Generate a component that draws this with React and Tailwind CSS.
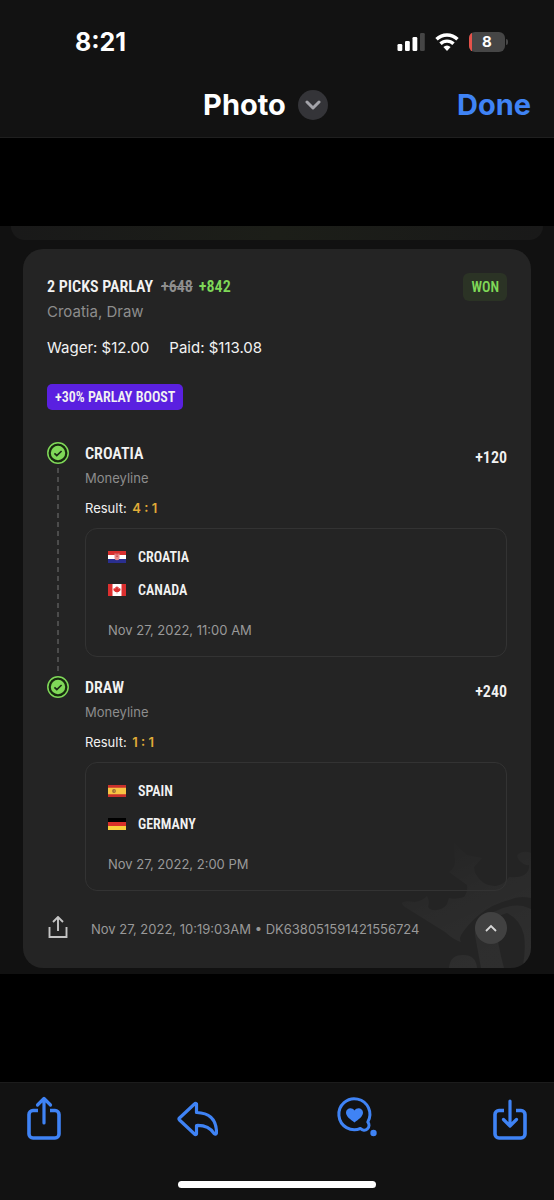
import clsx from 'clsx';

const legs = [
  {
    pick: 'CROATIA',
    market: 'Moneyline',
    result: '4 : 1',
    odds: '+120',
    date: 'Nov 27, 2022, 11:00 AM',
    teams: [
      { name: 'CROATIA', flag: 'croatia' },
      { name: 'CANADA', flag: 'canada' },
    ],
  },
  {
    pick: 'DRAW',
    market: 'Moneyline',
    result: '1 : 1',
    odds: '+240',
    date: 'Nov 27, 2022, 2:00 PM',
    teams: [
      { name: 'SPAIN', flag: 'spain' },
      { name: 'GERMANY', flag: 'germany' },
    ],
  },
];

const narrow = "font-['Roboto_Condensed','Liberation_Sans_Narrow',Roboto,sans-serif] font-semibold";

function Flag({ country }) {
  return (
    <svg className="w-[18px] h-3 shrink-0" viewBox="0 0 18 12" aria-hidden="true">
      {country === 'croatia' && (
        <>
          <path fill="#d8302f" d="M0 0h18v4H0z" />
          <path fill="#fff" d="M0 4h18v4H0z" />
          <path fill="#2a2f8f" d="M0 8h18v4H0z" />
          <path fill="#e88a8a" d="M6.500 2.500h5v4.500a2.500 2.200 0 0 1-5 0z" />
          <path fill="#c94a50" d="M7.500 2h3v1.500h-3zM8.300 4.500h1.500V6H8.300z" />
        </>
      )}
      {country === 'canada' && (
        <>
          <path fill="#fff" d="M0 0h18v12H0z" />
          <path fill="#dc2f2f" d="M0 0h4.500v12H0zM13.500 0H18v12h-4.500z" />
          <path fill="#dc2f2f" d="M9 2l.9 1.500.9-.4-.2 1.800 1.100-.8.9.9-.3 1.500-1.700 1.500H9.300v1.500h-.6V8H7.300L5.600 6.500 5.300 5l.9-.9 1.100.8-.2-1.800.9.4z" />
        </>
      )}
      {country === 'spain' && (
        <>
          <path fill="#c9302c" d="M0 0h18v12H0z" />
          <path fill="#f7c443" d="M0 2.800h18v6.400H0z" />
          <circle cx="6" cy="6" r="1.900" fill="#9a6a35" />
          <circle cx="6.300" cy="6" r=".7" fill="#d8a04a" />
        </>
      )}
      {country === 'germany' && (
        <>
          <path fill="#000" d="M0 0h18v4H0z" />
          <path fill="#d8302a" d="M0 4h18v4H0z" />
          <path fill="#f8cf3c" d="M0 8h18v4H0z" />
        </>
      )}
    </svg>
  );
}

function StatusBar() {
  return (
    <div className="flex items-center justify-between h-11 pl-[75px] pr-[46px]">
      <span className="text-[25px] leading-8 font-bold">8:21</span>
      <div className="flex items-center gap-2.5">
        <svg className="w-7 h-5" viewBox="0 0 28 20" aria-hidden="true">
          <rect x="0.500" y="12" width="4.800" height="7" rx="1.300" fill="#fff" />
          <rect x="8" y="9" width="4.800" height="10" rx="1.300" fill="#fff" />
          <rect x="15.500" y="5" width="4.800" height="14" rx="1.300" fill="#fff" />
          <rect x="23" y="1" width="4.800" height="18" rx="1.300" fill="#454545" />
        </svg>
        <svg className="w-6 h-5" viewBox="0 0 24 20" aria-hidden="true">
          <g fill="none" stroke="#fff" strokeWidth="3.400">
            <path d="M1.500 7.300a15 15 0 0 1 21 0" />
            <path d="M5.500 11.800a9.300 9.300 0 0 1 13 0" />
          </g>
          <path fill="#fff" d="M12 19l-3.600-3.900a5 5 0 0 1 7.200 0z" />
        </svg>
        <div className="flex items-center gap-px">
          <div className="relative flex items-center justify-center w-9 h-5 rounded-md bg-[#464646] overflow-hidden">
            <span className="absolute left-0 inset-y-0 w-[3px] bg-[#e5524a]" />
            <span className="text-[15px] leading-5 font-bold">8</span>
          </div>
          <span className="w-0.5 h-1.5 rounded-r-full bg-[#464646]" />
        </div>
      </div>
    </div>
  );
}

function WonCheck() {
  return (
    <svg className="w-[22px] h-[22px] shrink-0" viewBox="0 0 22 22" aria-hidden="true">
      <circle cx="11" cy="11" r="10.200" fill="#17290f" stroke="#7fd858" strokeWidth="1.500" />
      <circle cx="11" cy="11" r="7.200" fill="#7fd858" />
      <path d="M7.400 11.300l2.400 2.200 4.800-4.500" fill="none" stroke="#1c2a16" strokeWidth="1.700" />
    </svg>
  );
}

function Watermark() {
  return (
    <svg className="absolute right-0 bottom-0 w-[130px] h-[138px]" viewBox="0 0 130 138" aria-hidden="true">
      <defs>
        <linearGradient id="fade" gradientUnits="userSpaceOnUse" x1="50" y1="20" x2="95" y2="120">
          <stop offset="0" stopColor="#fff" stopOpacity="0.006" />
          <stop offset="0.450" stopColor="#fff" stopOpacity="0.030" />
          <stop offset="1" stopColor="#fff" stopOpacity="0.045" />
        </linearGradient>
      </defs>
      <g fill="url(#fade)">
        <path d="M1 73q2-3 13-1 7-1 12-6 3 5 1 11 3 4 9 3 7-1 10-6l2-6q6 2 15-1 4-5 3-12L48 42q6-4 6-10L53 13l13 12 15 3-8 9 1 6q8 14 21 13 9-2 13-9 10 1 15-2 6-4 5-10-5 1-10-5-3-4-1-6 6-4 13-1v45q-12-3-22 2-17 4-30 15-11 9-18 20-2 4 0 7-7-2-16-10L4 77q-3-2-3-4z" />
        <path d="M74 97q8-12 21-16 14-7 27-5l8 3v43q-3 9-8 13 3-16 1-30-4-16-17-22-10 2-11 10 1 20 8 45H80l-6-33z" />
        <path d="M48 138q1-13 14-13t14 13z" />
      </g>
    </svg>
  );
}

function Leg({ leg, last }) {
  return (
    <li className="flex gap-4">
      <div className="flex flex-col items-center w-[22px]">
        <WonCheck />
        <span
          className={clsx(
            'flex-1 w-0.5 mt-1 mb-1',
            !last && 'bg-[repeating-linear-gradient(to_bottom,#4c4c4c_0_5px,transparent_5px_9px)]'
          )}
        />
      </div>
      <div className="flex-1 min-w-0 pb-[19px]">
        <div className="flex items-center justify-between h-6">
          <h2 className={clsx(narrow, 'text-base leading-6')}>{leg.pick}</h2>
          <span className={clsx(narrow, 'text-base leading-6 pt-2')}>{leg.odds}</span>
        </div>
        <p className="mt-0.5 text-[13px] leading-5 text-[#8d8d8d]">{leg.market}</p>
        <p className="mt-2.5 text-[13px] leading-5">
          Result: <span className="ml-0.5 font-semibold text-[#e0ac38]">{leg.result}</span>
        </p>
        <div className="mt-2.5 px-[22px] py-4 border border-[#333] rounded-xl">
          <ul className="flex flex-col gap-[9px]">
            {leg.teams.map((team) => (
              <li key={team.name} className="flex items-center gap-3 h-6">
                <Flag country={team.flag} />
                <span className={clsx(narrow, 'text-sm leading-6')}>{team.name}</span>
              </li>
            ))}
          </ul>
          <p className="mt-[18px] text-[13px] leading-5 text-[#999]">{leg.date}</p>
        </div>
      </div>
    </li>
  );
}

function BetCard() {
  return (
    <article className="relative mx-[23px] mt-[9px] pt-6 px-6 pb-[22px] rounded-[20px] bg-[#242424] overflow-hidden">
      <Watermark />
      <div className="relative">
        <header className="flex items-center justify-between h-7">
          <h1 className={clsx(narrow, 'flex text-base leading-6')}>
            2 PICKS PARLAY
            <s className="ml-2 text-[#8f8f8f]">+648</s>
            <span className="ml-1.5 text-[#7fd858]">+842</span>
          </h1>
          <span className={clsx(narrow, 'px-2 rounded-md bg-[#2b3325] text-sm leading-7 text-[#7fd858]')}>WON</span>
        </header>
        <p className="text-[15px] leading-[22px] text-[#8d8d8d]">Croatia, Draw</p>
        <p className="mt-3.5 flex gap-5 text-[15px] leading-[22px]">
          <span>Wager: $12.00</span>
          <span>Paid: $113.08</span>
        </p>
        <p className={clsx(narrow, 'mt-[25px] w-fit px-2 rounded-[5px] bg-[#5a20e0] text-sm leading-[26px]')}>
          +30% PARLAY BOOST
        </p>
        <ul className="mt-8">
          {legs.map((leg, i) => (
            <Leg key={leg.pick} leg={leg} last={i === legs.length - 1} />
          ))}
        </ul>
        <footer className="flex items-center h-9">
          <button type="button" aria-label="Share bet" className="w-[22px] text-[#c4c4c4]">
            <svg className="w-[22px] h-6" viewBox="0 0 22 24" fill="none" stroke="currentColor" strokeWidth="1.900">
              <path d="M2.500 11v10h17V11" />
              <path d="M11 15V1.500M6 6l5-5 5 5" />
            </svg>
          </button>
          <p className="ml-[22px] pt-0.5 text-[13px] leading-5 text-[#999]">Nov 27, 2022, 10:19:03AM • DK638051591421556724</p>
          <button
            type="button"
            aria-label="Collapse"
            className="ml-auto flex items-center justify-center size-8 rounded-full bg-[#414141]"
          >
            <svg className="w-3 h-2" viewBox="0 0 12 8" fill="none" stroke="#d8d8d8" strokeWidth="1.800">
              <path d="M1 7l5-5 5 5" />
            </svg>
          </button>
        </footer>
      </div>
    </article>
  );
}

function Toolbar() {
  return (
    <nav className="flex items-start justify-between h-[118px] pt-3 px-[26px] border-t border-[#1c1c1c] bg-[#121212] text-[#3f83f5]">
      <button type="button" aria-label="Share">
        <svg className="w-9 h-12" viewBox="0 0 36 48" fill="none" stroke="currentColor" strokeWidth="3.600" strokeLinecap="round" strokeLinejoin="round">
          <path d="M12 15.500H7a4 4 0 0 0-4 4V39a4 4 0 0 0 4 4h22a4 4 0 0 0 4-4V19.500a4 4 0 0 0-4-4h-5" strokeLinecap="butt" />
          <path d="M18 28V4M11.500 10L18 3.500l6.500 6.500" strokeWidth="3.200" />
        </svg>
      </button>
      <button type="button" aria-label="Reply">
        <svg className="w-[42px] h-12" viewBox="0 0 42 48" fill="none" stroke="currentColor" strokeWidth="3.200" strokeLinejoin="round">
          <path d="M20.500 9q-1-1-2 0L3.500 23q-1 1 0 2l15 14q1 1 2 0V30.500q12-.5 17.500 8 2 1.500 2.500-.5 0-20-20-20.500z" />
        </svg>
      </button>
      <button type="button" aria-label="React" className="ml-1">
        <svg className="w-[42px] h-12" viewBox="0 0 42 48" aria-hidden="true">
          <path fill="none" stroke="currentColor" strokeWidth="3" strokeLinejoin="round" d="M31.800 27a15.500 15.500 0 1 0-7.300 6.500 4.200 4.200 0 1 0 7.300-6.500z" />
          <path fill="currentColor" d="M18.500 27.500c-4-3-8.500-6-8.500-10 0-4.500 6-6 8.500-2 2.500-4 8.500-2.500 8.500 2 0 4-4.500 7-8.500 10z" />
          <circle cx="37.500" cy="38" r="3.200" fill="currentColor" />
        </svg>
      </button>
      <button type="button" aria-label="Save">
        <svg className="w-9 h-12" viewBox="0 0 36 48" fill="none" stroke="currentColor" strokeWidth="3.600" strokeLinecap="round" strokeLinejoin="round">
          <path d="M12 15.500H7a4 4 0 0 0-4 4V39a4 4 0 0 0 4 4h22a4 4 0 0 0 4-4V19.500a4 4 0 0 0-4-4h-5" strokeLinecap="butt" />
          <path d="M18 6v24M11.500 24.500L18 31l6.500-6.500" strokeWidth="3.200" />
        </svg>
      </button>
    </nav>
  );
}

export default function App() {
  return (
    <div className="relative min-h-screen bg-black text-[#f2f2f2] font-[Inter,sans-serif]">
      <header className="h-[138px] pt-5 border-b border-[#1f1f1f] bg-[#121212] text-white">
        <StatusBar />
        <div className="grid grid-cols-[1fr_auto_1fr] items-center mt-[23px] pr-[23px] h-9">
          <button type="button" className="col-start-2 flex items-center gap-3 text-[29px] leading-9 font-bold">
            Photo
            <span className="flex items-center justify-center size-[30px] rounded-full bg-[#343438]">
              <svg className="w-4 h-2.5" viewBox="0 0 16 10" fill="none" stroke="#a4a4aa" strokeWidth="3" strokeLinecap="round" strokeLinejoin="round">
                <path d="M2 2l6 6 6-6" />
              </svg>
            </span>
          </button>
          <button type="button" className="justify-self-end text-[29px] leading-9 font-bold text-[#3f83f5]">Done</button>
        </div>
      </header>

      <main className="mt-[88px] mb-[108px] pb-1.5 bg-[#111]">
        <div className="mx-[11px] h-3.5 rounded-b-2xl bg-linear-to-r from-[#191919] via-[#1c1e18] to-[#191919]" />
        <BetCard />
      </main>

      <Toolbar />
      <div className="absolute bottom-3 left-1/2 -translate-x-1/2 w-[198px] h-[7px] rounded-full bg-white" />
    </div>
  );
}
